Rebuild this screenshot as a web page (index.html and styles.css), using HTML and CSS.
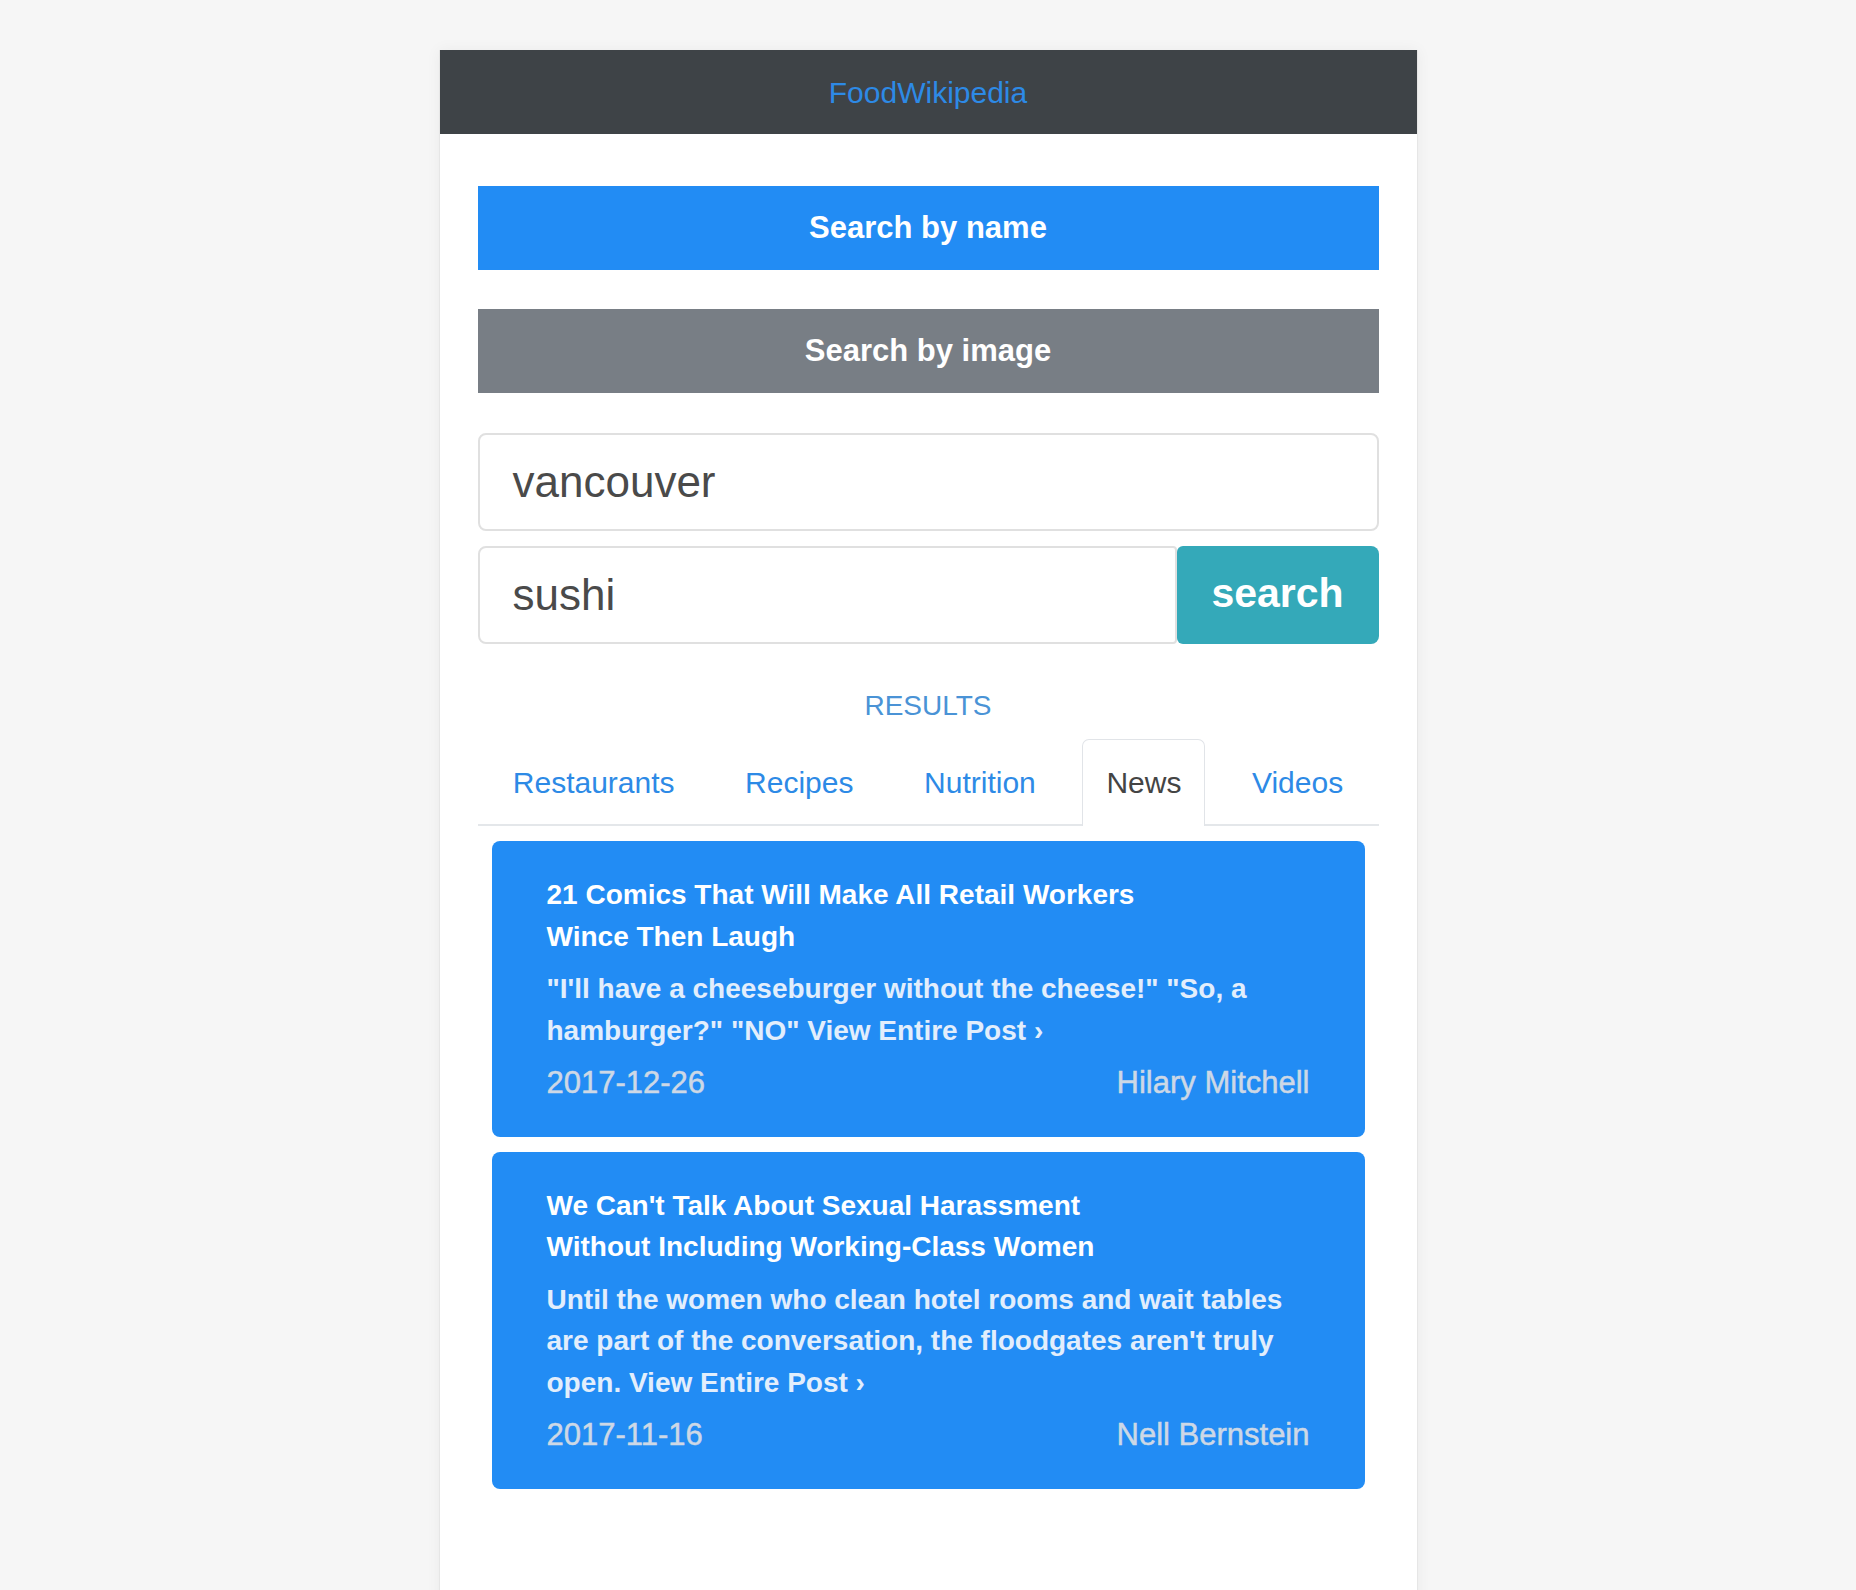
FILE: index.html
```html
<!DOCTYPE html>
<html lang="en">
<head>
<meta charset="utf-8">
<title>FoodWikipedia</title>
<link rel="stylesheet" href="styles.css">
</head>
<body>
<div class="app">
  <header class="navbar"><span class="brand">FoodWikipedia</span></header>
  <main class="content">
    <button class="btn btn-primary">Search by name</button>
    <button class="btn btn-secondary">Search by image</button>
    <div class="field">vancouver</div>
    <div class="search-row">
      <div class="field field-grow">sushi</div>
      <button class="btn-search">search</button>
    </div>
    <div class="results-label">RESULTS</div>
    <nav class="tabs">
      <span class="tab">Restaurants</span>
      <span class="tab">Recipes</span>
      <span class="tab">Nutrition</span>
      <span class="tab tab-active">News</span>
      <span class="tab">Videos</span>
    </nav>
    <div class="cards">
      <article class="card">
        <h3 class="card-title">21 Comics That Will Make All Retail Workers Wince Then Laugh</h3>
        <p class="card-text">"I'll have a cheeseburger without the cheese!" "So, a hamburger?" "NO" View Entire Post ›</p>
        <div class="card-meta"><span>2017-12-26</span><span>Hilary Mitchell</span></div>
      </article>
      <article class="card">
        <h3 class="card-title">We Can't Talk About Sexual Harassment Without Including Working-Class Women</h3>
        <p class="card-text">Until the women who clean hotel rooms and wait tables are part of the conversation, the floodgates aren't truly open. View Entire Post ›</p>
        <div class="card-meta"><span>2017-11-16</span><span>Nell Bernstein</span></div>
      </article>
    </div>
  </main>
</div>
</body>
</html>
```

FILE: styles.css
```css
* { box-sizing: border-box; }
html, body { margin: 0; padding: 0; }
body {
  background: #f6f6f6;
  font-family: "Liberation Sans", Arial, sans-serif;
  height: 1590px;
  overflow: hidden;
}
.app {
  width: 979px;
  margin: 50px auto 0;
  background: #fff;
  min-height: 1600px;
  border-left: 1px solid #e6e6e6;
  border-right: 1px solid #e6e6e6;
  box-shadow: 0 0 14px rgba(0,0,0,0.05);
}
.navbar {
  height: 84px;
  background: #3e4347;
  display: flex;
  align-items: center;
  justify-content: center;
}
.brand {
  color: #2d8ae6;
  font-size: 30px;
  padding-top: 2px;
}
.content {
  padding: 52px 38px 0;
  display: flex;
  flex-direction: column;
}
.btn {
  display: block;
  width: 100%;
  height: 84px;
  border: none;
  color: #fff;
  font-family: inherit;
  font-weight: bold;
  font-size: 31px;
  padding: 0;
}
.btn-primary { background: #228cf4; }
.btn-secondary { background: #787e85; margin-top: 39px; }
.field {
  margin-top: 40px;
  height: 98px;
  border: 2px solid #e0e0e0;
  border-radius: 8px;
  padding: 0 33px;
  display: flex;
  align-items: center;
  font-size: 44px;
  color: #4a4a4a;
}
.search-row {
  margin-top: 15px;
  display: flex;
  height: 98px;
}
.search-row .field {
  margin-top: 0;
  border-radius: 8px 4px 4px 8px;
}
.field-grow { flex: 1; }
.btn-search {
  width: 202px;
  border: none;
  background: #34a9b9;
  color: #fff;
  font-family: inherit;
  font-weight: bold;
  font-size: 41px;
  border-radius: 6px 8px 8px 6px;
  padding: 0 0 4px;
}
.results-label {
  margin-top: 41px;
  text-align: center;
  color: #4a93d6;
  font-size: 28px;
  line-height: 42px;
}
.tabs {
  margin-top: 12px;
  display: flex;
  justify-content: space-around;
  border-bottom: 2px solid #e4e7ea;
}
.tab {
  font-size: 30px;
  line-height: 45px;
  padding: 20px 23px;
  color: #2d8ae6;
  border: 1px solid transparent;
  border-bottom: none;
  border-radius: 7px 7px 0 0;
  margin-bottom: -2px;
}
.tab-active {
  color: #444;
  background: #fff;
  border-color: #e1e4e8;
  padding-bottom: 21px;
}
.cards {
  margin: 15px 14px 0;
  display: flex;
  flex-direction: column;
  gap: 15px;
}
.card {
  background: #228cf4;
  border-radius: 8px;
  padding: 33px 55px 33px;
  color: #fff;
  font-size: 28px;
  font-weight: bold;
  line-height: 41.5px;
}
.card-title {
  margin: 0;
  font-size: 28px;
  max-width: 620px;
}
.card-text {
  margin: 11px 0 0;
  color: #e2eefc;
}
.card-meta {
  margin-top: 11px;
  display: flex;
  justify-content: space-between;
  color: #cdd8e6;
  font-weight: normal;
  font-size: 31px;
  -webkit-text-stroke: 0.5px currentColor;
}
```
